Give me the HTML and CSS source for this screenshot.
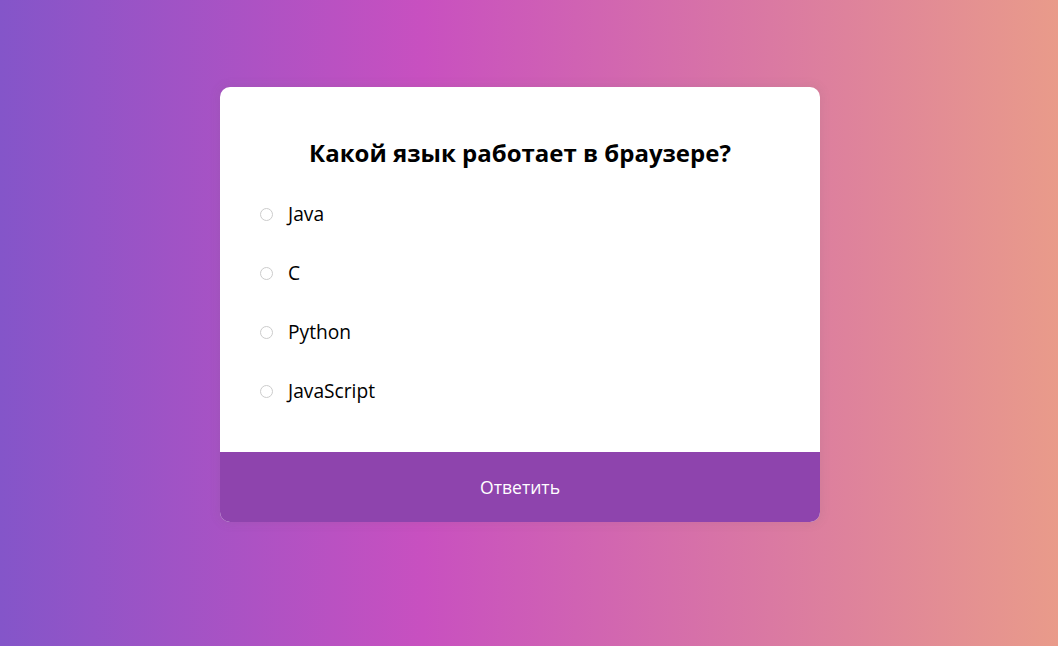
FILE: index.html
```html
<!DOCTYPE html>
<html lang="ru">
<head>
<meta charset="utf-8">
<link rel="stylesheet" href="styles.css">
<title>Quiz</title>
</head>
<body>
<div class="quiz">
  <div class="quiz-body">
    <h2 class="question">Какой язык работает в браузере?</h2>
    <ul class="answers">
      <li class="answer"><label><input type="radio" name="a"><span>Java</span></label></li>
      <li class="answer"><label><input type="radio" name="a"><span>C</span></label></li>
      <li class="answer"><label><input type="radio" name="a"><span>Python</span></label></li>
      <li class="answer"><label><input type="radio" name="a"><span>JavaScript</span></label></li>
    </ul>
  </div>
  <button class="submit">Ответить</button>
</div>
</body>
</html>
```
FILE: styles.css
```css
* { box-sizing: border-box; }
html, body { height: 100%; }
body {
  margin: 0;
  font-family: "Open Sans", "Noto Sans", sans-serif;
  background: linear-gradient(90deg, #8455c9 0%, #c850c0 40%, #e99b8a 100%);
  display: flex;
  justify-content: center;
  align-items: flex-start;
  padding: 87px 18px 0 0;
}
.quiz {
  width: 600px;
  background: #fff;
  border-radius: 10px;
  overflow: hidden;
  box-shadow: 0 0 10px 2px rgba(100, 100, 100, 0.1);
}
.quiz-body {
  padding: 40px 40px 32px;
}
.question {
  margin: 9px 0 14px;
  text-align: center;
  font-size: 24px;
  line-height: 34px;
  font-weight: 700;
  color: #000;
}
.answers {
  list-style: none;
  margin: 0;
  padding: 0;
}
.answer {
  height: 59px;
  display: flex;
  align-items: center;
  font-size: 19.2px;
}
.answer label {
  display: flex;
  align-items: center;
  cursor: pointer;
}
.answer input {
  appearance: none;
  -webkit-appearance: none;
  width: 13px;
  height: 13px;
  margin: 2px 15px 0 0;
  border: 1px solid #ccc;
  border-radius: 50%;
  background: #fff;
}
.submit {
  display: block;
  width: 100%;
  height: 70px;
  border: none;
  background: #8e44ad;
  color: #fff;
  font-family: "Open Sans", "Noto Sans", sans-serif;
  font-size: 17.6px;
  cursor: pointer;
}
```
